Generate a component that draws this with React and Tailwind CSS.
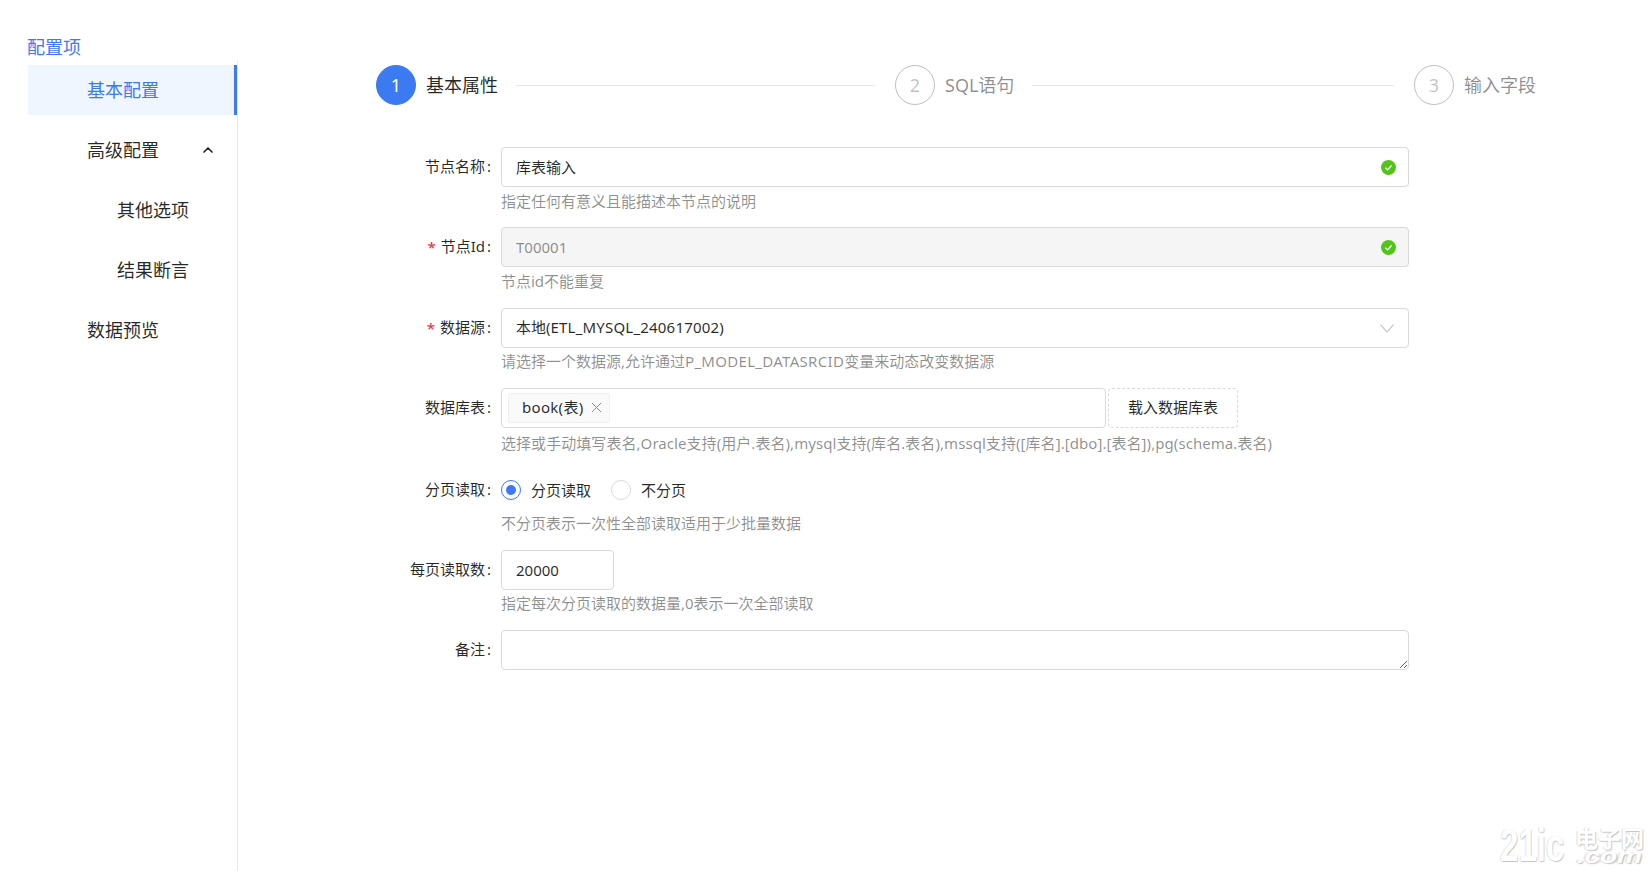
import { ChevronUp } from "lucide-react";

const Check = () => (
  <svg width="15" height="15" viewBox="0 0 15 15" className="-mr-[2px]">
    <circle cx="7.5" cy="7.5" r="7.5" fill="#52c41a" />
    <path d="M4.4 7.7 6.6 9.9 10.6 5.4" fill="none" stroke="#fff" strokeWidth="1.3" />
  </svg>
);

const Down = () => (
  <svg width="14" height="9" viewBox="0 0 14 9">
    <path d="M0.5 0.7 7 8 13.5 0.7" fill="none" stroke="#bfbfbf" strokeWidth="1.1" />
  </svg>
);

const MenuItem = ({ children, active, sub, icon }) => (
  <div
    className={`flex h-[50px] items-center justify-between pr-[24px] text-[18px] ${sub ? "pl-[89px]" : "pl-[59px]"} ${active ? "border-r-[3px] border-[#3b7af0] bg-[#f0f6ff] text-[#3b7af0]" : "text-black/85"}`}
  >
    <span>{children}</span>
    {icon}
  </div>
);

const Step = ({ num, title, active, last }) => (
  <div className={`flex h-[40px] items-center ${last ? "" : "flex-1"}`}>
    <div
      className={`flex h-[40px] w-[40px] shrink-0 items-center justify-center rounded-full border text-[18px] ${active ? "border-[#3b7af0] bg-[#3b7af0] text-white" : "border-black/25 text-black/25"}`}
    >
      {num}
    </div>
    <div className={`ml-[10px] whitespace-nowrap text-[18px] ${active ? "text-black/85" : "text-black/45"}`}>{title}</div>
    {!last && <div className="ml-[18px] h-px flex-1 bg-[#e8e8e8]" />}
  </div>
);

const Row = ({ label, required, hint, hintClass, className, children }) => (
  <div className={`flex ${className || "h-[80px]"}`}>
    <div className="flex h-[38px] w-[125px] shrink-0 items-center justify-end pr-[8px] text-[15px] text-black/85">
      {required && <span className="mr-[5px] translate-y-[1px] text-[#f5222d]">*</span>}
      {label}
      <span className="ml-[2px] mr-[2px]">:</span>
    </div>
    <div className="min-w-0 flex-1">
      {children}
      {hint && (
        <div className={`whitespace-nowrap text-[15px] leading-[22px] text-black/45 ${hintClass || "mt-[3px]"}`}>{hint}</div>
      )}
    </div>
  </div>
);

const Box = ({ children, disabled }) => (
  <div
    className={`flex h-[40px] items-center justify-between rounded-[4px] border border-[#d9d9d9] pl-[14px] pr-[14px] text-[15px] ${disabled ? "bg-[#f5f5f5] text-black/45" : "bg-white text-black/85"}`}
  >
    {children}
  </div>
);

const Radio = ({ checked, children }) => (
  <div className="flex items-center">
    <div
      className={`flex h-[20px] w-[20px] items-center justify-center rounded-full border ${checked ? "border-[#3b7af0]" : "border-[#d9d9d9]"}`}
    >
      {checked && <div className="h-[10px] w-[10px] rounded-full bg-[#3b7af0]" />}
    </div>
    <span className="ml-[10px] text-[15px] text-black/85">{children}</span>
  </div>
);

export default function App() {
  return (
    <div className="relative flex h-[871px] overflow-hidden bg-white font-['Noto_Sans','Noto_Sans_CJK_SC',sans-serif]">
      <div className="ml-[28px] flex w-[210px] shrink-0 flex-col">
        <div className="-ml-[1px] h-[60px] pt-[34px] text-[18px] leading-[26px] text-[#3b7af0]">配置项</div>
        <div className="flex flex-1 flex-col gap-[10px] border-r border-[#e8e8e8] pt-[5px]">
          <MenuItem active>基本配置</MenuItem>
          <MenuItem icon={<ChevronUp size={16} strokeWidth={2.6} className="-mr-[3px] text-black/85" />}>高级配置</MenuItem>
          <MenuItem sub>其他选项</MenuItem>
          <MenuItem sub>结果断言</MenuItem>
          <MenuItem>数据预览</MenuItem>
        </div>
      </div>

      <div className="ml-[138px] w-[1160px] pt-[65px]">
        <div className="flex gap-[20px]">
          <Step num="1" title="基本属性" active />
          <Step num="2" title="SQL语句" />
          <Step num="3" title="输入字段" last />
        </div>

        <div className="mt-[42px] w-[1033px]">
          <Row label="节点名称" hint="指定任何有意义且能描述本节点的说明">
            <Box>
              <span>库表输入</span>
              <Check />
            </Box>
          </Row>
          <Row label="节点Id" required hint="节点id不能重复" className="h-[81px]">
            <Box disabled>
              <span>T00001</span>
              <Check />
            </Box>
          </Row>
          <Row
            label="数据源"
            required
            hintClass="mt-[2px]"
            hint={
              <>
                请选择一个数据源,允许通过<span className="tracking-[0.3px]">P_MODEL_DATASRCID</span>变量来动态改变数据源
              </>
            }
          >
            <Box>
              <span className="pb-[1px]">
                本地(<span className="tracking-[0.2px]">ETL_MYSQL_240617002</span>)
              </span>
              <Down />
            </Box>
          </Row>
          <Row
            label="数据库表"
            className="h-[82px]"
            hintClass="mt-[4px]"
            hint={
              <span className="tracking-[0.06px]">
                选择或手动填写表名,Oracle支持(用户.表名),mysql支持(库名.表名),mssql支持([库名].[dbo].[表名]),pg(schema.表名)
              </span>
            }
          >
            <div className="flex gap-[2px]">
              <div className="flex h-[40px] w-[605px] items-center rounded-[4px] border border-[#d9d9d9] pl-[6px]">
                <div className="flex h-[30px] w-[102px] items-center rounded-[2px] border border-[#f0f0f0] bg-[#fafafa] pb-[1px] pl-[13px] text-[15px] text-black/85">
                  <span className="tracking-[0.3px]">book(表)</span>
                  <svg width="11" height="11" viewBox="0 0 11 11" className="ml-[7px]">
                    <path d="M1 1 10 10M10 1 1 10" stroke="#8c8c8c" strokeWidth="1" />
                  </svg>
                </div>
              </div>
              <div className="flex h-[40px] w-[130px] items-center justify-center rounded-[4px] border border-dashed border-[#d9d9d9] pb-[1px] text-[15px] text-black/85">
                载入数据库表
              </div>
            </div>
          </Row>
          <Row label="分页读取" hintClass="mt-[2px]" hint="不分页表示一次性全部读取适用于少批量数据">
            <div className="flex h-[40px] items-center gap-[20px]">
              <Radio checked>分页读取</Radio>
              <Radio>不分页</Radio>
            </div>
          </Row>
          <Row label="每页读取数" hintClass="mt-[2px]" hint="指定每次分页读取的数据量,0表示一次全部读取">
            <div className="w-[113px]">
              <Box>20000</Box>
            </div>
          </Row>
          <Row label="备注">
            <textarea
              readOnly
              className="block h-[40px] w-full resize-y rounded-[4px] border border-[#d9d9d9] bg-white outline-none"
            />
          </Row>
        </div>
      </div>

      <div className="absolute bottom-[8px] right-[8px] flex select-none items-end gap-[9px] text-white [text-shadow:1px_1px_1px_#c4c4c4,-1px_0_1px_#dedede]">
        <div className="h-[36px] w-[66px]">
          <span className="block origin-left scale-x-[0.72] font-['Liberation_Sans',sans-serif] text-[46px] font-bold leading-[36px]">
            21ic
          </span>
        </div>
        <div className="flex w-[69px] flex-col items-center">
          <span className="text-[23px] font-bold leading-[22px]">电子网</span>
          <span className="origin-center scale-x-[1.4] font-['Liberation_Sans',sans-serif] text-[20px] font-bold italic leading-[14px]">
            .com
          </span>
        </div>
      </div>
    </div>
  );
}
